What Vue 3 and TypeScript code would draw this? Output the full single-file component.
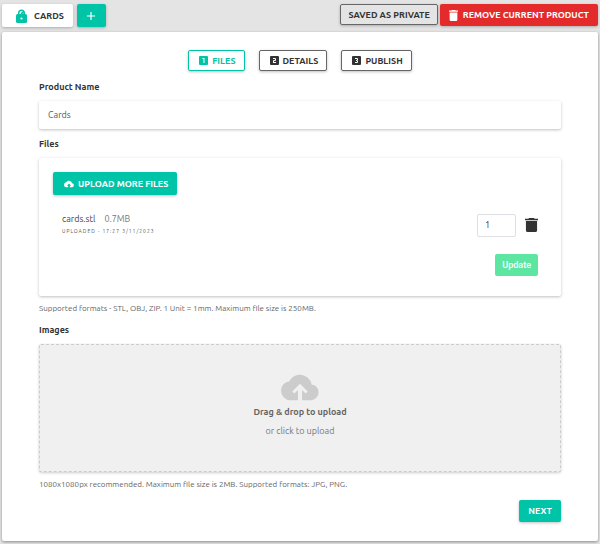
<script setup lang="ts">
import { ref } from 'vue'

interface Step {
  number: number
  label: string
  glyph: string
}

const steps: Step[] = [
  { number: 1, label: 'Files', glyph: 'M14 17h-2V9h-2V7h4z' },
  { number: 2, label: 'Details', glyph: 'M15 11a2 2 0 0 1-2 2h-2v2h4v2H9v-4a2 2 0 0 1 2-2h2V9H9V7h4a2 2 0 0 1 2 2z' },
  { number: 3, label: 'Publish', glyph: 'M15 10.500a1.500 1.500 0 0 1-1.500 1.500 1.500 1.500 0 0 1 1.500 1.500V15a2 2 0 0 1-2 2H9v-2h4v-2h-2v-2h2V9H9V7h4a2 2 0 0 1 2 2z' },
]

const boxPath = 'M19 3H5a2 2 0 0 0-2 2v14a2 2 0 0 0 2 2h14a2 2 0 0 0 2-2V5a2 2 0 0 0-2-2z'
const trashPath = 'M6 19a2 2 0 0 0 2 2h8a2 2 0 0 0 2-2V7H6zM19 4h-3.500l-1-1h-5l-1 1H5v2h14z'
const cloudPath =
  'M19.350 10.040A7.490 7.490 0 0 0 12 4C9.110 4 6.600 5.640 5.350 8.040A5.994 5.994 0 0 0 0 14a6 6 0 0 0 6 6h4.700v-6.500L8.400 15.800 7.100 14.500 12 9.600l4.900 4.900-1.300 1.300-2.300-2.300V20H19a5 5 0 0 0 .350-9.960z'
const cloudSolidPath =
  'M19.350 10.040A7.490 7.490 0 0 0 12 4C9.110 4 6.600 5.640 5.350 8.040A5.994 5.994 0 0 0 0 14a6 6 0 0 0 6 6h4v-4H7l5-5 5 5h-3v4h5a5 5 0 0 0 .350-9.960z'

const activeStep = ref(1)
const productName = ref('Cards')
const quantity = ref('1')
</script>

<template>
  <div class="page">
    <header class="topbar">
      <button type="button" class="btn tab">
        <svg class="lock" viewBox="1 0 22 28" aria-hidden="true">
          <path d="M4 10h16a3 3 0 0 1 3 3v12a3 3 0 0 1-3 3H4a3 3 0 0 1-3-3V13a3 3 0 0 1 3-3z" />
          <path class="shackle" d="M6.500 11V8a5.500 5.500 0 0 1 11 0v3M11 9.500l5.500-3.500" />
          <circle class="hole" cx="12" cy="19" r="2.200" />
        </svg>
        Cards
      </button>
      <button type="button" class="btn add" aria-label="Add product">
        <svg viewBox="0 0 24 24" aria-hidden="true"><path d="M19 13h-6v6h-2v-6H5v-2h6V5h2v6h6z" /></svg>
      </button>
      <span class="spacer"></span>
      <button type="button" class="btn outline">Saved as private</button>
      <button type="button" class="btn danger">
        <svg viewBox="5 3 14 18" preserveAspectRatio="none" aria-hidden="true"><path :d="trashPath" /></svg>
        Remove current product
      </button>
    </header>

    <main class="panel">
      <nav class="steps">
        <button
          v-for="step in steps"
          :key="step.number"
          type="button"
          class="btn outline step"
          :class="{ active: step.number === activeStep }"
          @click="activeStep = step.number"
        >
          <svg viewBox="3 3 18 18" aria-hidden="true">
            <path :d="boxPath" />
            <path class="digit" :d="step.glyph" />
          </svg>
          {{ step.label }}
        </button>
      </nav>

      <label class="heading" for="product-name">Product Name</label>
      <input id="product-name" v-model="productName" class="card name" type="text" />

      <h2 class="heading">Files</h2>
      <section class="card files">
        <button type="button" class="btn primary upload">
          <svg viewBox="0 3 24 18" aria-hidden="true"><path :d="cloudSolidPath" /></svg>
          Upload more files
        </button>
        <div class="file">
          <div class="info">
            <div class="title">cards.stl <span class="size">0.7MB</span></div>
            <div class="meta">Uploaded - 17:27 3/11/2023</div>
          </div>
          <input v-model="quantity" class="qty" type="text" inputmode="numeric" aria-label="Quantity" />
          <button type="button" class="trash" aria-label="Delete file">
            <svg viewBox="5 3 14 18" preserveAspectRatio="none" aria-hidden="true"><path :d="trashPath" /></svg>
          </button>
        </div>
        <button type="button" class="update">Update</button>
      </section>
      <p class="help">Supported formats - STL, OBJ, ZIP. 1 Unit = 1mm. Maximum file size is 250MB.</p>

      <h2 class="heading">Images</h2>
      <label class="drop">
        <input class="picker" type="file" accept=".jpg,.png" multiple />
        <svg viewBox="0 3 24 18" aria-hidden="true"><path :d="cloudPath" /></svg>
        <strong>Drag &amp; drop to upload</strong>
        <span>or click to upload</span>
      </label>
      <p class="help">1080x1080px recommended. Maximum file size is 2MB. Supported formats: JPG, PNG.</p>

      <button type="button" class="btn primary next">Next</button>
    </main>
  </div>
</template>

<style>
body {
  background: #e4e4e4;
}
</style>

<style scoped>
.page,
.page * {
  box-sizing: border-box;
}
.page {
  padding: 4px 2px 3px;
  font-family: Ubuntu, "Noto Sans", sans-serif;
  font-size: 9px;
  line-height: 12px;
  color: #333;
}
button,
input {
  margin: 0;
  font: inherit;
  color: inherit;
}
button {
  cursor: pointer;
}
svg {
  display: block;
  flex: none;
  fill: currentColor;
}
.topbar {
  display: flex;
  align-items: flex-start;
  gap: 2px;
  height: 28px;
}
.spacer {
  flex: 1;
}
.btn {
  display: flex;
  align-items: center;
  justify-content: center;
  height: 22px;
  padding: 0 9px;
  border: 0;
  border-radius: 2px;
  font-weight: 700;
  text-transform: uppercase;
  white-space: nowrap;
  box-shadow: 0 1px 3px rgba(0, 0, 0, 0.25);
}
.tab {
  height: 23px;
  gap: 7px;
  margin-right: 2px;
  padding: 0 9px 0 14px;
  background: #fff;
}
.lock {
  width: 11px;
  height: 14px;
  color: #00c4a7;
}
.shackle {
  fill: none;
  stroke: currentColor;
  stroke-width: 3;
}
.hole {
  fill: #fff;
}
.add {
  width: 29px;
  height: 23px;
  padding: 0;
  color: #fff;
  background: #00c4a7;
}
.add svg {
  width: 14px;
  height: 14px;
}
.outline {
  height: 21px;
  padding: 0 7px;
  border: 1px solid #666;
  background: transparent;
}
.danger {
  gap: 5px;
  color: #fff;
  background: #e42a2a;
}
.danger svg {
  width: 9px;
  height: 11px;
}
.panel {
  display: flex;
  flex-direction: column;
  padding: 18px 37px 19px;
  border-radius: 2px;
  background: #fff;
  box-shadow: 0 1px 3px rgba(0, 0, 0, 0.4);
}
.steps {
  display: flex;
  justify-content: center;
  gap: 14px;
  margin-bottom: 10px;
}
.step {
  gap: 4px;
  padding: 0 8px 0 10px;
  height: 21px;
  background: #fff;
}
.step svg {
  width: 9px;
  height: 9px;
}
.step.active {
  color: #00c4a7;
  border-color: #00c4a7;
}
.digit {
  fill: #fff;
}
.heading {
  margin: 0 0 8px;
  font-size: 9px;
  font-weight: 700;
  line-height: 12px;
}
.card {
  width: 100%;
  border: 0;
  border-radius: 2px;
  background: #fff;
  box-shadow: 0 1px 3px rgba(0, 0, 0, 0.25);
}
.name {
  height: 28px;
  margin-bottom: 9px;
  padding: 0 9px;
  color: #555;
}
.files {
  display: flex;
  flex-direction: column;
  padding: 14px 23px 20px 14px;
}
.primary {
  color: #fff;
  background: #00c4a7;
}
.upload {
  align-self: flex-start;
  gap: 4px;
  height: 23px;
  padding-left: 11px;
}
.upload svg {
  width: 10px;
  height: 8px;
}
.file {
  display: flex;
  align-items: center;
  margin: 18px 0 17px;
  padding-left: 9px;
}
.info {
  flex: 1;
}
.title {
  color: #444;
}
.size {
  margin-left: 7px;
  color: #777;
}
.meta {
  font-size: 5px;
  letter-spacing: 1px;
  text-transform: uppercase;
  color: #555;
}
.qty {
  width: 39px;
  height: 23px;
  padding: 0 7px;
  border: 1px solid #dcdfe6;
  border-radius: 2px;
  background: #fff;
}
.trash {
  margin-left: 9px;
  padding: 0;
  border: 0;
  background: none;
}
.trash svg {
  width: 13px;
  height: 14px;
}
.update {
  align-self: flex-end;
  height: 22px;
  padding: 0 7px;
  border: 0;
  border-radius: 2px;
  font-family: Roboto, sans-serif;
  font-weight: 500;
  color: #fff;
  background: #5ce6a1;
}
.help {
  margin: 7px 0 9px;
  font-size: 8px;
  color: #666;
}
.drop {
  position: relative;
  display: flex;
  flex-direction: column;
  align-items: center;
  height: 128px;
  padding-top: 28px;
  border: 1px dashed #ccc;
  border-radius: 2px;
  color: #777;
  background: #f0f0f0;
  box-shadow: 0 1px 3px rgba(0, 0, 0, 0.2);
  cursor: pointer;
}
.drop svg {
  width: 38px;
  height: 29px;
  margin-bottom: 4px;
  color: #ccc;
}
.drop strong {
  margin-bottom: 7px;
  color: #666;
}
.picker {
  position: absolute;
  inset: 0;
  width: 100%;
  height: 100%;
  opacity: 0;
}
.next {
  align-self: flex-end;
}
</style>
